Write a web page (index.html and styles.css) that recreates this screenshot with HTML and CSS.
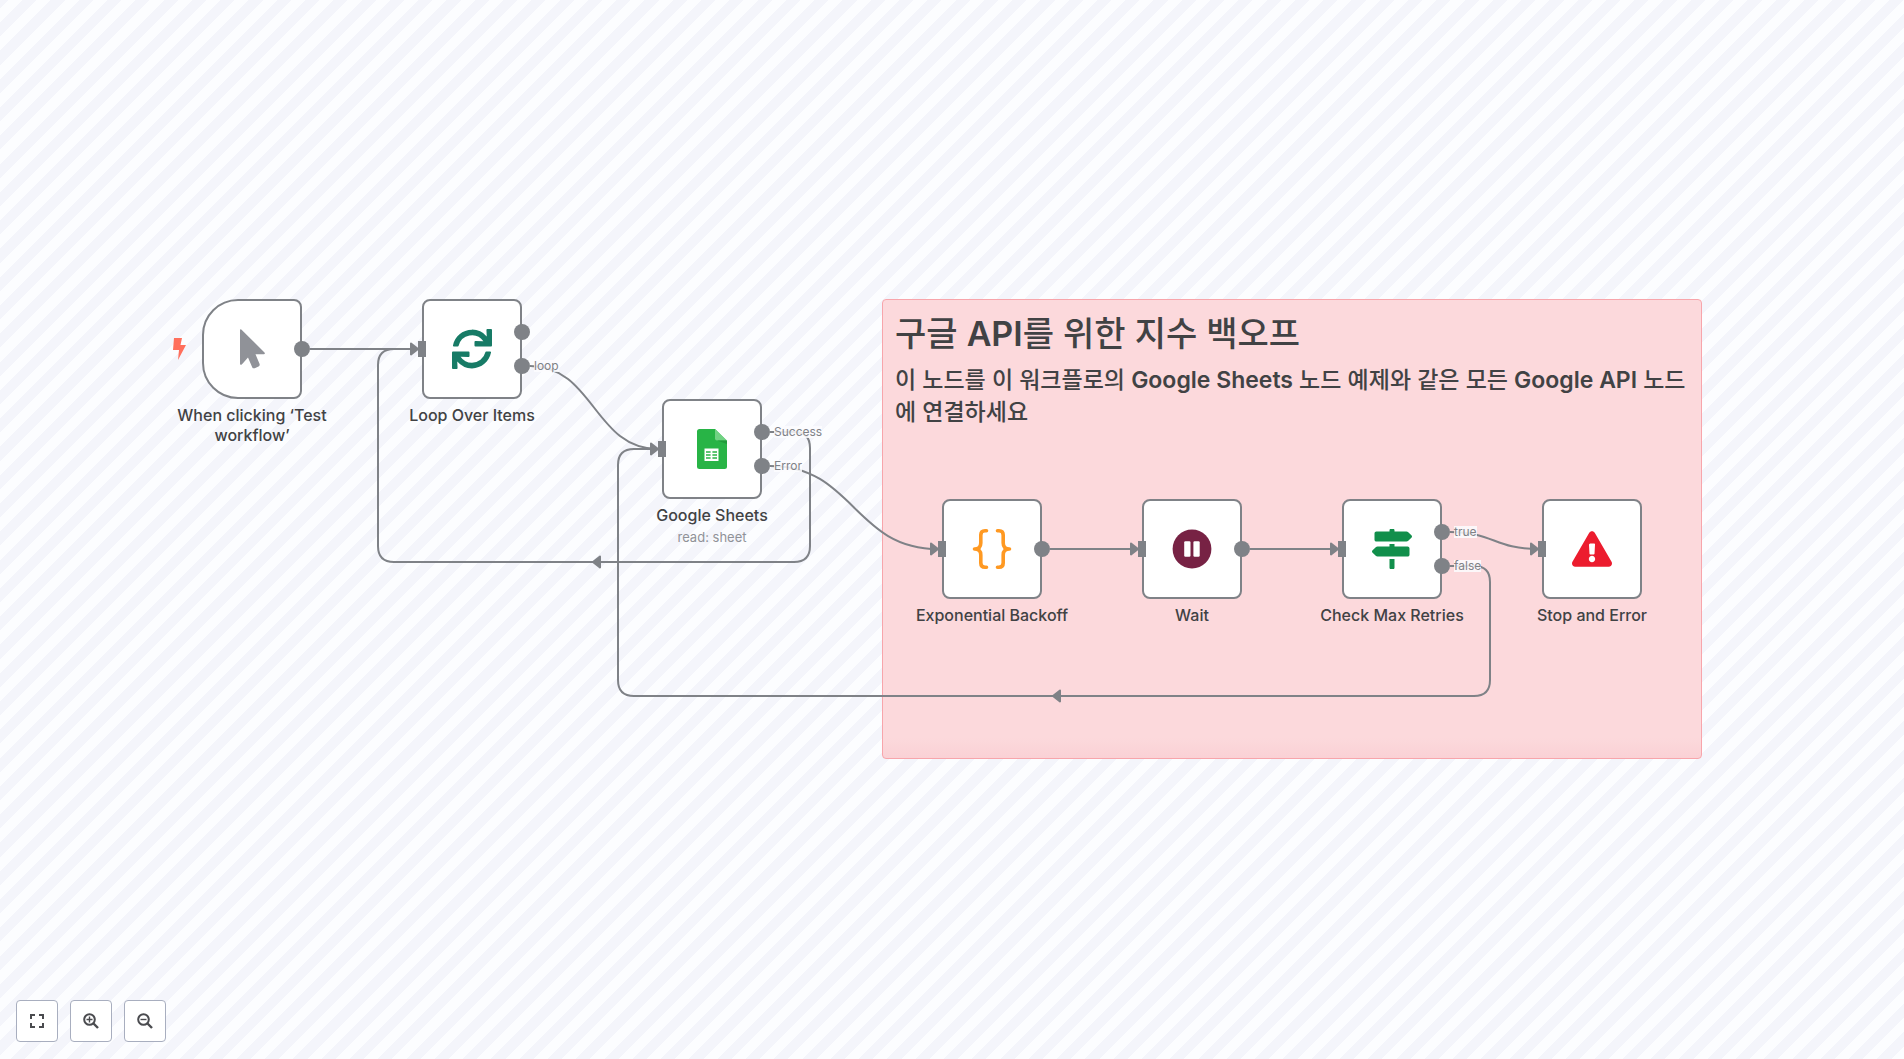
FILE: index.html
```html
<!DOCTYPE html>
<html lang="ko">
<head>
<meta charset="utf-8">
<meta name="viewport" content="width=device-width, initial-scale=1">
<title>구글 API를 위한 지수 백오프</title>
<link rel="stylesheet" href="styles.css">
</head>
<body>
<main class="canvas">
  <section class="sticky">
    <h1>구글 <b>API</b>를 위한 지수 백오프</h1>
    <h2>이 노드를 이 워크플로의 <b>Google Sheets</b> 노드 예제와 같은 모든 <b>Google API</b> 노드에 연결하세요</h2>
  </section>

  <svg class="edges" aria-hidden="true">
    <path d="M310 349H412"/>
    <path d="M530 366C594 366 594 449 658 449"/>
    <path d="M770 432H794Q810 432 810 448V546Q810 562 794 562H394Q378 562 378 546V365Q378 349 394 349H412"/>
    <path d="M770 466C854 466 854 549 938 549"/>
    <path d="M1050 549H1132"/>
    <path d="M1250 549H1332"/>
    <path d="M1450 532C1494 532 1494 549 1538 549"/>
    <path d="M1450 566H1474Q1490 566 1490 582V680Q1490 696 1474 696H634Q618 696 618 680V465Q618 449 634 449H652"/>
    <g class="arrows">
      <path d="M411 343.5L418 349L411 354.500Z"/>
      <path d="M651 443.500L658 449L651 454.500Z"/>
      <path d="M931 543.500L938 549L931 554.500Z"/>
      <path d="M1131 543.500L1138 549L1131 554.500Z"/>
      <path d="M1331 543.500L1338 549L1331 554.500Z"/>
      <path d="M1531 543.500L1538 549L1531 554.500Z"/>
      <path d="M600 556.500L593 562L600 567.500Z"/>
      <path d="M1060 690.500L1053 696L1060 701.500Z"/>
    </g>
  </svg>

  <article class="node trigger n-trigger">
    <svg class="bolt" viewBox="0 0 13 22"><path d="M1 0H9L7.500 7H13L5 22L6 12H0Z"/></svg>
    <svg class="icon" viewBox="0 0 40 40"><path fill="#909298" d="M8 1.200Q8-.5 9.300.500L32.500 23.500Q33.500 25 31.800 25.200H23.500L27.600 35Q28 36.500 27 37.200L22.800 39.200Q21 39.700 20.300 38.500L16 28.500L9.800 35.500Q8 36.500 8 34.800Z"/></svg>
    <i class="out"></i>
    <h3>When clicking ‘Test workflow’</h3>
  </article>

  <article class="node n-loop">
    <svg class="icon" viewBox="0 0 512 512"><path fill="#177b66" d="M440.650 12.570l4 82.770A247.160 247.160 0 0 0 255.830 8C134.730 8 33.910 94.920 12.290 209.820A12 12 0 0 0 24.090 224h49.050a12 12 0 0 0 11.670-9.260 175.910 175.910 0 0 1 317-56.940l-101.460-4.860a12 12 0 0 0-12.570 12v47.410a12 12 0 0 0 12 12H500a12 12 0 0 0 12-12V12a12 12 0 0 0-12-12h-47.370a12 12 0 0 0-11.980 12.570zM255.830 432a175.610 175.610 0 0 1-146-77.800l101.800 4.870a12 12 0 0 0 12.570-12v-47.400a12 12 0 0 0-12-12H12a12 12 0 0 0-12 12V500a12 12 0 0 0 12 12h47.350a12 12 0 0 0 12-12.600l-4.150-82.570A247.170 247.170 0 0 0 255.830 504c121.110 0 221.930-86.920 243.550-201.820a12 12 0 0 0-11.800-14.180h-49.050a12 12 0 0 0-11.670 9.260A175.860 175.860 0 0 1 255.830 432z"/></svg>
    <i class="in"></i><i class="out top"></i><i class="out bottom"></i>
    <span class="port bottom">loop</span>
    <h3>Loop Over Items</h3>
  </article>

  <article class="node n-sheets">
    <svg class="icon" viewBox="0 0 40 40"><path fill="#28b446" d="M7.500 0H23L35 12V37.500Q35 40 32.500 40H7.500Q5 40 5 37.500V2.500Q5 0 7.500 0Z"/><path fill="#71d283" d="M23 0L35 11.500H25Q23 11.500 23 9.500Z"/><path fill="#219b3b" d="M25 11.500H35V15Z"/><path fill="#fff" d="M12.500 19.500H26.500V32H12.500Z"/><path stroke="#28b446" stroke-width="1.300" d="M14 23H18.600M20.400 23H25M14 26H18.600M20.400 26H25M14 29H18.600M20.400 29H25"/></svg>
    <i class="in"></i><i class="out top"></i><i class="out bottom"></i>
    <span class="port top">Success</span><span class="port bottom">Error</span>
    <h3>Google Sheets</h3>
    <p>read: sheet</p>
  </article>

  <article class="node n-backoff">
    <svg class="icon" viewBox="0 0 40 40"><path fill="none" stroke="#ff9922" stroke-width="3.600" stroke-linecap="round" stroke-linejoin="round" d="M14.500 1.800H13Q8.800 1.800 8.800 6V14Q8.800 20 2.500 20Q8.800 20 8.800 26V34Q8.800 38.200 13 38.200H14.500M25.500 1.800H27Q31.200 1.800 31.200 6V14Q31.200 20 37.500 20Q31.200 20 31.200 26V34Q31.200 38.200 27 38.200H25.500"/></svg>
    <i class="in"></i><i class="out"></i>
    <h3>Exponential Backoff</h3>
  </article>

  <article class="node n-wait">
    <svg class="icon" viewBox="0 0 40 40"><circle cx="20" cy="20" r="19.400" fill="#772244"/><rect x="12.200" y="12.300" width="6.300" height="15.500" rx="1.200" fill="#fff"/><rect x="21.400" y="12.300" width="6.300" height="15.500" rx="1.200" fill="#fff"/></svg>
    <i class="in"></i><i class="out"></i>
    <h3>Wait</h3>
  </article>

  <article class="node n-check">
    <svg class="icon" viewBox="0 0 512 512"><path fill="#118f4b" d="M507.310 84.690L464 41.370c-6-6-14.140-9.370-22.630-9.370H288V16c0-8.840-7.160-16-16-16h-32c-8.840 0-16 7.160-16 16v16H56c-13.250 0-24 10.750-24 24v80c0 13.250 10.750 24 24 24h385.370c8.490 0 16.620-3.370 22.630-9.370l43.310-43.310c6.250-6.260 6.250-16.380 0-22.630zM224 496c0 8.840 7.160 16 16 16h32c8.840 0 16-7.160 16-16V384h-64v112zm232-272H288v-32h-64v32H70.630c-8.490 0-16.620 3.370-22.630 9.370L4.690 276.690c-6.250 6.250-6.250 16.380 0 22.630L48 342.630c6 6 14.140 9.370 22.630 9.370H456c13.250 0 24-10.750 24-24v-80c0-13.250-10.750-24-24-24z"/></svg>
    <i class="in"></i><i class="out top"></i><i class="out bottom"></i>
    <span class="port top">true</span><span class="port bottom">false</span>
    <h3>Check Max Retries</h3>
  </article>

  <article class="node n-stop">
    <svg class="icon" viewBox="0 0 576 512"><path fill="#ec1c2e" d="M569.517 440.013C587.975 472.007 564.806 512 527.940 512H48.054c-36.937 0-59.999-40.055-41.577-71.987L246.423 23.985c18.467-32.009 64.720-31.951 83.154 0l239.940 416.028zM288 354c-25.405 0-46 20.595-46 46s20.595 46 46 46 46-20.595 46-46-20.595-46-46-46zm-43.673-165.346l7.418 136c.347 6.364 5.609 11.346 11.982 11.346h48.546c6.373 0 11.635-4.982 11.982-11.346l7.418-136c.375-6.874-5.098-12.654-11.982-12.654h-57.383c-6.884 0-12.356 5.780-11.981 12.654z"/></svg>
    <i class="in"></i>
    <h3>Stop and Error</h3>
  </article>

  <nav class="controls">
    <button type="button" aria-label="Zoom to fit"><svg viewBox="0 0 16 16"><path fill="none" stroke="#4a4b4f" stroke-width="2" d="M6 2H2V6M10 2H14V6M14 10V14H10M6 14H2V10"/></svg></button>
    <button type="button" aria-label="Zoom in"><svg viewBox="0 0 16 16"><g fill="none" stroke="#4a4b4f"><circle cx="6.500" cy="6.500" r="5.300" stroke-width="2"/><path stroke-width="2.400" d="M10.500 10.500L15 15"/><path stroke-width="1.400" d="M3.500 6.500H9.500M6.500 3.500V9.500"/></g></svg></button>
    <button type="button" aria-label="Zoom out"><svg viewBox="0 0 16 16"><g fill="none" stroke="#4a4b4f"><circle cx="6.500" cy="6.500" r="5.300" stroke-width="2"/><path stroke-width="2.400" d="M10.500 10.500L15 15"/><path stroke-width="1.400" d="M3.500 6.500H9.500"/></g></svg></button>
  </nav>
</main>
</body>
</html>
```
FILE: styles.css
```css
* { box-sizing: border-box; }

body {
  margin: 0;
  font-family: Inter, "Noto Sans CJK KR", sans-serif;
  color: #414244;
}

h1, h2, h3, p { margin: 0; }

.canvas {
  position: relative;
  min-height: 100vh;
  overflow: hidden;
  background: repeating-linear-gradient(135deg, #f4f5fb 0 6px, #fcfdff 6px 16px, #f4f5fb 16px 20px);
}

.sticky {
  position: absolute;
  left: 882px;
  top: 299px;
  width: 820px;
  height: 460px;
  padding: 11px 12px;
  border: 1px solid #f8a5ab;
  border-radius: 4px;
  background: linear-gradient(#fcd9dc calc(100% - 20px), #fad1d5);
}

.sticky h1 {
  margin-bottom: 8px;
  font-size: 34px;
  line-height: 45px;
  font-weight: 500;
}

.sticky h2 {
  font-size: 23px;
  line-height: 32px;
  font-weight: 500;
}

.sticky b { font-weight: 600; }

.edges {
  position: absolute;
  inset: 0;
  width: 100%;
  height: 100%;
  fill: none;
  stroke: #7f8287;
  stroke-width: 2;
}

.arrows {
  fill: #7f8287;
  stroke-linejoin: round;
}

.node {
  position: absolute;
  display: grid;
  place-items: center;
  width: 100px;
  height: 100px;
  border: 2px solid #7f8287;
  border-radius: 8px;
  background: #fff;
}

.trigger { border-radius: 36px 8px 8px 36px; }

.n-trigger { left: 202px; top: 299px; }
.n-loop { left: 422px; top: 299px; }
.n-sheets { left: 662px; top: 399px; }
.n-backoff { left: 942px; top: 499px; }
.n-wait { left: 1142px; top: 499px; }
.n-check { left: 1342px; top: 499px; }
.n-stop { left: 1542px; top: 499px; }

.icon {
  width: 40px;
  height: 40px;
}

.bolt {
  position: absolute;
  left: -31px;
  top: 37px;
  width: 13px;
  height: 22px;
  fill: #ff6f5c;
}

.in, .out {
  position: absolute;
  top: 40px;
  height: 16px;
  background: #7f8287;
}

.in {
  left: -6px;
  width: 8px;
}

.out {
  right: -10px;
  width: 16px;
  border-radius: 50%;
}

.out.top { top: 23px; }
.out.bottom { top: 57px; }

.port {
  position: absolute;
  left: 110px;
  font-size: 12px;
  line-height: 12px;
  color: #7f8287;
  background: rgba(251, 252, 254, 0.85);
}

.port.top { top: 25px; }
.port.bottom { top: 59px; }

.node h3 {
  position: absolute;
  top: 104px;
  width: 160px;
  font-size: 16px;
  line-height: 20px;
  font-weight: 500;
  text-align: center;
}

.node p {
  position: absolute;
  top: 126px;
  font-size: 13px;
  line-height: 20px;
  color: #909298;
  white-space: nowrap;
}

.controls {
  position: absolute;
  left: 16px;
  bottom: 17px;
  display: flex;
  gap: 12px;
}

.controls button {
  display: grid;
  place-items: center;
  width: 42px;
  height: 42px;
  padding: 0;
  border: 1px solid #a8aebf;
  border-radius: 4px;
  background: #fff;
}

.controls svg {
  width: 16px;
  height: 16px;
}
```
